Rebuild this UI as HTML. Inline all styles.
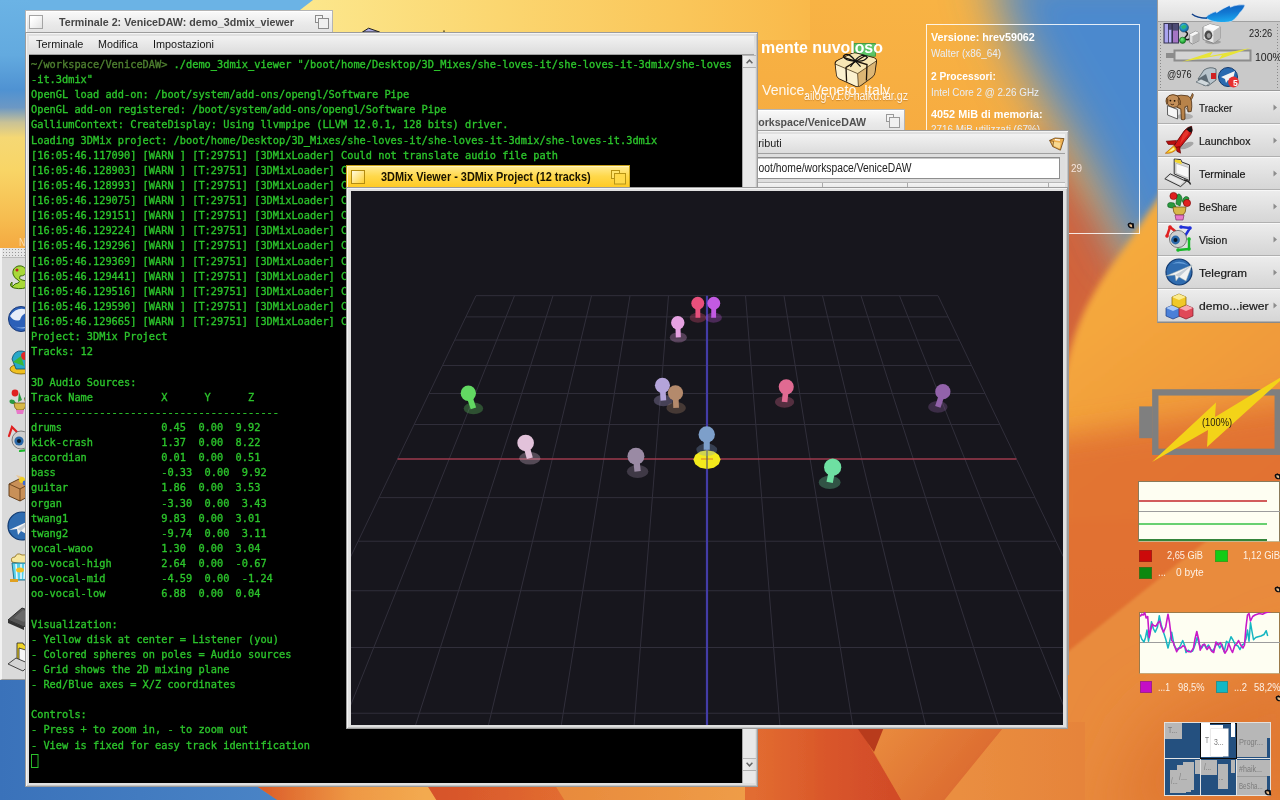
<!DOCTYPE html>
<html lang="it"><head><meta charset="utf-8"><title>Haiku desktop - 3DMix Viewer</title>
<style>
html,body{margin:0;padding:0}
body{width:1280px;height:800px;overflow:hidden;position:relative;background:#f0953c;font-family:"Liberation Sans",sans-serif;font-size:12px;color:#000}
.a{position:absolute}
.t{position:absolute;white-space:nowrap;transform-origin:0 50%;display:block}
svg{position:absolute;overflow:visible}
pre{margin:0}
.tab{background:linear-gradient(#fafafa,#e9e9e9 60%,#e2e2e2);border:1px solid #b4b4b4;border-bottom:none;box-sizing:border-box;box-shadow:inset 1px 1px 0 #fff}
.tab.act{background:linear-gradient(#ffeb94,#ffd84a 45%,#ffc81e);border-color:#c9a21a;box-shadow:inset 1px 1px 0 #fff4c0}
.cbtn{width:14px;height:14px;box-sizing:border-box;border:1px solid #a4a4a4;background:linear-gradient(135deg,#fff 20%,#e2e2e2)}
.cbtn.act{border-color:#b48c10;background:linear-gradient(135deg,#fffbe0,#ffd030)}
.frame{box-sizing:border-box;border:1px solid #9c9c9c;background:#e0e0e0;box-shadow:inset 1px 1px 0 #f4f4f4, inset -1px -1px 0 #c4c4c4}
.menubar{background:linear-gradient(#f2f2f2,#dcdcdc);border-bottom:1px solid #a0a0a0;box-sizing:border-box}
.vscroll{background:#e9e9e9;box-sizing:border-box;border-left:1px solid #a8a8a8}
.sbtn{background:linear-gradient(90deg,#f0f0f0,#dedede);border-bottom:1px solid #b0b0b0;border-top:1px solid #b8b8b8;box-sizing:border-box}
.term{font-family:"DejaVu Sans Mono","Liberation Mono",monospace;color:#2cc42c;-webkit-text-stroke:0.35px #2cc42c;transform-origin:0 0;white-space:pre}
.term .pr{color:#4f8030;-webkit-text-stroke:0.35px #4f8030}
.term .cur{display:inline-block;width:5.6px;height:12px;border:1px solid #2cc42c;vertical-align:-2px}
.dbi{background:linear-gradient(#ececec,#dcdcdc 70%,#d6d6d6);border-top:1px solid #f8f8f8;border-bottom:1px solid #b0b0b0;box-sizing:border-box}
.wsw{background:#b7b7b7}

</style></head>
<body>
<svg class="bg" width="1280" height="800" viewBox="0 0 1280 800" style="left:0;top:0;overflow:hidden">
<defs>
<linearGradient id="gbase" x1="0" y1="0" x2="0" y2="1">
<stop offset="0" stop-color="#f8b344"/><stop offset=".3" stop-color="#f5a63e"/><stop offset=".55" stop-color="#ec8e3a"/><stop offset="1" stop-color="#e27a34"/>
</linearGradient>
<linearGradient id="gtop" x1="0" y1="0" x2="1" y2="0">
<stop offset="0" stop-color="#fce88e"/><stop offset=".4" stop-color="#fbd670"/><stop offset=".75" stop-color="#fac65a"/><stop offset="1" stop-color="#f9b94a"/>
</linearGradient>
<linearGradient id="gleft" x1="0" y1="0" x2="0" y2="1">
<stop offset="0" stop-color="#6bb3e5"/><stop offset=".22" stop-color="#63aadf"/><stop offset=".36" stop-color="#4f92d2"/>
<stop offset=".43" stop-color="#6c98c4"/><stop offset=".49" stop-color="#c9c296"/><stop offset=".55" stop-color="#f5d874"/>
<stop offset=".68" stop-color="#f8d566"/><stop offset=".87" stop-color="#f6bd50"/><stop offset="1" stop-color="#f4a840"/>
</linearGradient>
<linearGradient id="gpetal" x1="0.2" y1="0" x2="0.7" y2="1">
<stop offset="0" stop-color="#f6b444"/><stop offset=".45" stop-color="#f4a63c"/><stop offset="1" stop-color="#ec8e3a"/>
</linearGradient>
<filter id="b8" x="-20%" y="-20%" width="140%" height="140%"><feGaussianBlur stdDeviation="8"/></filter>
<filter id="b14" x="-30%" y="-30%" width="160%" height="160%"><feGaussianBlur stdDeviation="14"/></filter>
<filter id="b18" x="-30%" y="-30%" width="160%" height="160%"><feGaussianBlur stdDeviation="25"/></filter>
<linearGradient id="gbl" x1="0" y1="0" x2="1" y2="0"><stop offset="0" stop-color="#3a72ba"/><stop offset="1" stop-color="#4a84c6"/></linearGradient>
<linearGradient id="gp1" gradientUnits="userSpaceOnUse" x1="262" y1="0" x2="425" y2="0"><stop offset="0" stop-color="#dc5e2a"/><stop offset=".55" stop-color="#ee9844"/><stop offset="1" stop-color="#f3aa50"/></linearGradient>
<linearGradient id="gp2" gradientUnits="userSpaceOnUse" x1="432" y1="0" x2="560" y2="0"><stop offset="0" stop-color="#d6522a"/><stop offset="1" stop-color="#e26c30"/></linearGradient>
<linearGradient id="gp3" gradientUnits="userSpaceOnUse" x1="560" y1="0" x2="760" y2="0"><stop offset="0" stop-color="#e88a3c"/><stop offset="1" stop-color="#ef9e48"/></linearGradient>
<linearGradient id="gp4" gradientUnits="userSpaceOnUse" x1="755" y1="0" x2="890" y2="0"><stop offset="0" stop-color="#e26c30"/><stop offset=".6" stop-color="#d8542a"/><stop offset="1" stop-color="#d24c28"/></linearGradient>
<linearGradient id="gp5" gradientUnits="userSpaceOnUse" x1="890" y1="730" x2="975" y2="800"><stop offset="0" stop-color="#e8883c"/><stop offset="1" stop-color="#da662e"/></linearGradient>
<linearGradient id="gp6" gradientUnits="userSpaceOnUse" x1="960" y1="0" x2="1080" y2="0"><stop offset="0" stop-color="#ea8e40"/><stop offset="1" stop-color="#e6843a"/></linearGradient>
<filter id="b1" x="-5%" y="-5%" width="110%" height="110%"><feGaussianBlur stdDeviation="0.7"/></filter>
<filter id="b2" x="-20%" y="-20%" width="140%" height="140%"><feGaussianBlur stdDeviation="1.5"/></filter>
<filter id="b4" x="-20%" y="-20%" width="140%" height="140%"><feGaussianBlur stdDeviation="3"/></filter>
<filter id="b30" x="-30%" y="-30%" width="160%" height="160%"><feGaussianBlur stdDeviation="30"/></filter>
</defs>
<rect width="1280" height="800" fill="url(#gbase)"/>
<!-- pale yellow area behind terminal tab -->
<rect x="290" y="0" width="520" height="40" fill="url(#gtop)"/>
<polygon points="362.5,32 368.6,28.2 379.5,32" fill="#a9a9e2" stroke="#1e1e1e" stroke-width="1"/><rect x="443.2" y="30.4" width="1.6" height="1.6" fill="#6a5a2a"/>
<!-- top-left sky blue -->
<polygon points="0,0 313,0 287,20 0,20" fill="#6bb3e5"/>
<rect x="0" y="0" width="30" height="250" fill="url(#gleft)"/>
<!-- dark orange under blue -->
<g filter="url(#b14)"><path d="M1040,130 L1104,225 L1124,268 L1088,360 L1040,430 L1000,300 Z" fill="#d2643a"/></g>
<!-- blue petal top right -->
<g filter="url(#b18)">
<path d="M988,-40 C1000,20 1030,75 1062,126 C1084,160 1104,205 1128,262 L1320,262 L1320,-40 Z" fill="#4c89ce"/>
</g>
<!-- yellow-orange petal with crisp edge -->
<g filter="url(#b4)"><path d="M1170,180 C1150,210 1135,232 1127,244 C1112,265 1098,284 1085,310 C1076,330 1068,352 1060,400 L1040,520 L1320,520 L1320,100 Z" fill="url(#gpetal)"/></g>
<!-- lower right -->
<g filter="url(#b14)">
<polygon points="1040,440 1320,400 1320,560 1040,700" fill="#df6c2f" opacity=".8"/>
</g>
<g filter="url(#b2)"><polygon points="1040,674 1320,450 1320,830 1040,830" fill="#e98b3e"/></g>
<g filter="url(#b30)"><polygon points="1150,720 1320,640 1320,830 1100,830" fill="#e07832"/></g>
<!-- bottom strip petals -->
<polygon points="0,680 30,680 30,785 255,785 279,801 0,801" fill="url(#gbl)"/>
<g filter="url(#b1)">
<polygon points="255,785 427,785 437,801 279,801" fill="url(#gp1)"/>
<polygon points="427,785 555,785 565,801 437,801" fill="url(#gp2)"/>
<polygon points="555,785 765,785 765,801 565,801" fill="url(#gp3)"/>
<polygon points="745,722 855.5,722 906,808 745,808" fill="url(#gp4)"/>
<polygon points="884,722 1008,722 938,808 906,808 874,752" fill="url(#gp5)"/>
<polygon points="853,722 886,722 874,752" fill="#b83a1e"/>
<polygon points="1008,722 1085,722 1085,808 938,808" fill="url(#gp6)"/>
</g>
</svg>
<svg style="left:833px;top:42px" width="46" height="46" viewBox="0 0 46 46">
<rect x="21" y="1.6" width="21.4" height="12.6" fill="#5cc466" stroke="#2f9440" stroke-width=".8"/>
<g stroke-linejoin="round">
<path d="M2.4,22 Q2,19.6 5,18.4 L19,11.8 Q21,11 23.6,11.6 L40.6,16 Q43.6,17 43.2,20 L41.6,31 Q41.2,33.4 39,35 L27.4,43.4 Q25,45 22.4,43.8 L6.4,36.6 Q4,35.4 3.8,33 Z" fill="#f3dca0" stroke="#241608" stroke-width="1.5"/>
<path d="M2.6,22.4 L24.6,31.6 L25.4,44.2 Q24,44.6 22.4,43.8 L6.4,36.6 Q4,35.4 3.8,33 Z" fill="#fbf1cf"/>
<path d="M24.6,31.6 L43,19.2 L41.6,31 Q41.2,33.4 39,35 L27.4,43.4 Q26.4,44 25.4,44.2 Z" fill="#ddb674"/>
<path d="M2.6,22 Q2.4,19.8 5,18.4 L19,11.8 Q21,11 23.6,11.6 L40.6,16 Q43.4,16.8 43,19.2 L24.6,31.6 Z" fill="#f7e6b4"/>
</g>
<path d="M2.6,22.2 L24.6,31.6 L43,19.2 M24.6,31.6 L25.4,44" fill="none" stroke="#3a2810" stroke-width=".9" opacity=".8"/>
<path d="M11,15.6 L34,22.6 L33.4,38.6 M32,13.8 L13,25.4 L13.6,39.6" stroke="#1c1208" stroke-width="1.3" fill="none"/>
<path d="M22,18.6 q-7.6,-9.6 -11.6,-4.4 q3.2,5.4 11.6,4.400 q7.400,-8.600 12.400,-3.200 q-4.200,5.400 -12.400,3.200 M22,18.600 l-4.600,6.400 M22,18.600 l5.600,6" fill="none" stroke="#111" stroke-width="1.25"/>
</svg>
<span class="t" style="left:760.70px;top:38.43px;font-size:17.2px;line-height:19.76px;font-weight:bold;color:#ffffff;transform:scaleX(0.9251);">mente nuvoloso</span>
<span class="t" style="left:762.00px;top:80.62px;font-size:15px;line-height:17.23px;color:#ffffff;transform:scaleX(0.9417);opacity:.92;">Venice, Veneto, Italy</span>
<span class="t" style="left:803.70px;top:89.64px;font-size:12px;line-height:13.79px;color:#ffffff;transform:scaleX(0.8859);text-shadow:0 1px 1px rgba(120,60,0,.35);opacity:.88;">ailog-v1.0-haiku.tar.gz</span>
<div class="a" style="left:925.5px;top:24px;width:214px;height:209.5px;border:1px solid rgba(255,255,255,.85);box-sizing:border-box"></div>
<span class="t" style="left:931.00px;top:31.45px;font-size:11px;line-height:12.64px;font-weight:bold;color:#ffffff;transform:scaleX(0.9756);">Versione: hrev59062</span>
<span class="t" style="left:931.00px;top:47.34px;font-size:11px;line-height:12.64px;color:#e8eef6;transform:scaleX(0.8993);">Walter (x86_64)</span>
<span class="t" style="left:931.00px;top:69.64px;font-size:11px;line-height:12.64px;font-weight:bold;color:#ffffff;transform:scaleX(0.9297);">2 Processori:</span>
<span class="t" style="left:931.00px;top:85.64px;font-size:11px;line-height:12.64px;color:#e8eef6;transform:scaleX(0.8955);">Intel Core 2 @ 2.26 GHz</span>
<span class="t" style="left:931.00px;top:108.25px;font-size:11px;line-height:12.64px;font-weight:bold;color:#ffffff;transform:scaleX(0.9868);">4052 MiB di memoria:</span>
<span class="t" style="left:931.00px;top:123.05px;font-size:11px;line-height:12.64px;color:#e8eef6;transform:scaleX(0.9005);">2716 MiB utilizzati (67%)</span>
<span class="t" style="left:1071.00px;top:161.59px;font-size:11.5px;line-height:13.21px;color:#f4e4dc;transform:scaleX(0.8600);">29</span>
<svg style="left:1126.8px;top:222.2px" width="8" height="7" viewBox="0 0 8 7"><path d="M0.6,2.6 q0.2,-1.6 2,-1.8 l0.8,-0.6 l1,0.8 l2.4,0.2 l0.4,5.2 l-3.6,-0.2 q-2.8,-0.6 -3,-3.6z" fill="#0c0c10"/><path d="M2,2.6 q1.6,-1 3,0.2 l0.2,2.4 q-2.6,0.4 -3.2,-2.6z" fill="#e2b98a"/></svg>
<svg style="left:1135px;top:375px" width="145" height="100" viewBox="0 0 145 100">
<rect x="4.2" y="31.4" width="13.2" height="31.8" fill="#7f7f7f"/>
<rect x="20.3" y="17.4" width="122.4" height="59.4" fill="none" stroke="#7f7f7f" stroke-width="6.3"/>
<path d="M17,87 L81,27.6 L80,42 L156,-4 L72,72 L73,55 Z" fill="#f3d318"/>
</svg>
<span class="t" style="left:1201.70px;top:416.05px;font-size:11px;line-height:12.64px;color:#2a2010;transform:scaleX(0.8461);">(100%)</span>
<svg style="left:1274px;top:473px" width="8" height="7" viewBox="0 0 8 7"><path d="M0.6,2.6 q0.2,-1.6 2,-1.8 l0.8,-0.6 l1,0.8 l2.4,0.2 l0.4,5.2 l-3.6,-0.2 q-2.8,-0.6 -3,-3.6z" fill="#0c0c10"/><path d="M2,2.6 q1.6,-1 3,0.2 l0.2,2.4 q-2.6,0.4 -3.2,-2.6z" fill="#e2b98a"/></svg>
<div class="a" style="left:1138px;top:481px;width:142px;height:60.5px;background:#fefef2;border:1px solid #8a7a5a;border-bottom-color:#c8b890;box-sizing:border-box"></div>
<div class="a" style="left:1139px;top:500.2px;width:127.6px;height:1.8px;background:#d25c5c"></div>
<div class="a" style="left:1139px;top:511px;width:141px;height:1px;background:#9c9c9c"></div>
<div class="a" style="left:1139px;top:522.8px;width:127.6px;height:1.9px;background:#68d070"></div>
<div class="a" style="left:1139px;top:539px;width:127.6px;height:2px;background:#34843a"></div>
<div class="a" style="left:1139.2px;top:549.6px;width:12.6px;height:12.4px;background:#cc0a0a;box-shadow:inset 0 0 0 1px rgba(120,60,30,.45)"></div>
<div class="a" style="left:1215.2px;top:549.6px;width:12.8px;height:12.4px;background:#12cc16;box-shadow:inset 0 0 0 1px rgba(120,100,30,.45)"></div>
<div class="a" style="left:1139.2px;top:566.6px;width:12.6px;height:12.2px;background:#0b880f;box-shadow:inset 0 0 0 1px rgba(120,80,30,.45)"></div>
<span class="t" style="left:1166.80px;top:549.25px;font-size:11px;line-height:12.64px;color:#fdf0e4;transform:scaleX(0.8411);">2,65 GiB</span>
<span class="t" style="left:1243.00px;top:549.25px;font-size:11px;line-height:12.64px;color:#fdf0e4;transform:scaleX(0.8645);">1,12 GiB</span>
<span class="t" style="left:1157.50px;top:566.25px;font-size:11px;line-height:12.64px;color:#fdf0e4;transform:scaleX(0.8725);">...</span>
<span class="t" style="left:1175.50px;top:566.25px;font-size:11px;line-height:12.64px;color:#fdf0e4;transform:scaleX(0.9244);">0 byte</span>
<svg style="left:1274.4px;top:586px" width="8" height="7" viewBox="0 0 8 7"><path d="M0.6,2.6 q0.2,-1.6 2,-1.8 l0.8,-0.6 l1,0.8 l2.4,0.2 l0.4,5.2 l-3.6,-0.2 q-2.8,-0.6 -3,-3.6z" fill="#0c0c10"/><path d="M2,2.6 q1.6,-1 3,0.2 l0.2,2.4 q-2.6,0.4 -3.2,-2.6z" fill="#e2b98a"/></svg>
<div class="a" style="left:1139px;top:611.5px;width:141px;height:62px;background:#fefef2;border:1px solid #9a7a4a;border-bottom-color:#c8a878;box-sizing:border-box"></div>
<div class="a" style="left:1140px;top:642px;width:140px;height:1px;background:#9c9c9c"></div>
<svg style="left:1139px;top:612px;overflow:hidden" width="141" height="61" viewBox="0 0 141 61">
<polyline fill="none" stroke="#16b6c2" stroke-width="1.5" stroke-linejoin="round" points="1.2,22.5 2.7,27.0 5.0,30.0 6.5,25.5 8.0,18.0 9.5,29.2 11.0,20.2 12.5,9.7 14.3,16.5 16.2,20.2 18.5,15.0 20.3,3.7 22.2,12.7 24.5,20.2 26.7,27.0 29.0,36.0 30.5,30.0 32.7,20.2 35.0,33.0 37.2,36.7 39.5,37.5 41.7,33.0 43.7,28.5 45.5,33.0 47.0,40.5 49.2,38.2 51.5,39.7 53.7,39.0 56.0,33.0 58.2,25.5 60.5,33.0 62.7,36.0 65.0,32.2 67.2,36.0 69.5,33.0 71.7,37.5 74.0,39.0 76.2,34.5 78.5,30.7 80.7,36.0 83.0,32.2 85.2,39.7 87.5,29.2 89.7,31.5 92.0,24.7 94.2,28.5 96.5,33.0 98.7,33.7 101.0,37.5 103.2,33.0 104.7,32.2 107.0,27.0 108.5,18.0 110.0,29.2 111.5,10.5 113.0,19.5 114.5,27.7 116.7,25.5 119.0,24.7 122.0,24.0 125.0,22.5 127.2,18.7 128.7,24.0"/>
<polyline fill="none" stroke="#c81ac8" stroke-width="1.6" stroke-linejoin="round" points="1.2,4.5 2.7,2.2 4.2,3.0 5.7,0.7 7.2,6.0 8.7,4.5 10.2,25.5 11.7,18.0 13.2,12.0 14.7,13.5 17.0,14.2 19.2,10.5 20.7,9.0 22.2,15.0 24.5,20.2 26.7,15.0 29.0,2.2 30.5,10.5 32.7,28.5 34.2,30.0 35.7,34.5 37.7,39.7 39.5,36.0 41.7,36.0 44.0,33.7 46.2,35.2 47.7,39.0 50.0,39.7 52.2,39.7 54.5,36.0 56.0,27.0 57.8,19.5 59.7,27.7 61.2,38.2 63.5,33.0 65.7,32.2 68.0,37.5 70.2,34.5 72.5,39.0 74.7,40.5 77.0,30.0 79.2,33.0 81.5,30.7 83.7,36.0 86.0,41.2 88.2,37.5 89.7,31.5 92.0,37.5 93.5,40.5 95.7,33.7 98.0,31.5 99.5,28.5 101.7,33.0 104.0,36.0 105.5,33.0 107.0,15.0 108.5,3.0 110.0,1.5 111.5,9.0 113.7,4.5 116.0,3.0 118.2,2.2 120.5,1.5 123.5,2.2 126.5,0.7 129.5,-0.0 132.5,-0.8 137.0,-1.5 141.5,-2.7"/>
</svg>
<div class="a" style="left:1140px;top:681px;width:12px;height:12px;background:#c40ec6;box-shadow:inset 0 0 0 1px rgba(120,60,60,.45)"></div>
<div class="a" style="left:1216px;top:681px;width:12.2px;height:12px;background:#12b8c4;box-shadow:inset 0 0 0 1px rgba(90,90,60,.45)"></div>
<span class="t" style="left:1157.50px;top:681.04px;font-size:11px;line-height:12.64px;color:#fdf0e4;transform:scaleX(0.7850);">...1</span>
<span class="t" style="left:1178.20px;top:681.04px;font-size:11px;line-height:12.64px;color:#fdf0e4;transform:scaleX(0.8497);">98,5%</span>
<span class="t" style="left:1234.00px;top:681.04px;font-size:11px;line-height:12.64px;color:#fdf0e4;transform:scaleX(0.8505);">...2</span>
<span class="t" style="left:1254.20px;top:681.04px;font-size:11px;line-height:12.64px;color:#fdf0e4;transform:scaleX(0.8497);">58,2%</span>
<svg style="left:1275px;top:695px" width="8" height="7" viewBox="0 0 8 7"><path d="M0.6,2.6 q0.2,-1.6 2,-1.8 l0.8,-0.6 l1,0.8 l2.4,0.2 l0.4,5.2 l-3.6,-0.2 q-2.8,-0.6 -3,-3.6z" fill="#0c0c10"/><path d="M2,2.6 q1.6,-1 3,0.2 l0.2,2.4 q-2.6,0.4 -3.2,-2.6z" fill="#e2b98a"/></svg>
<div class="a" id="ws" style="left:1164px;top:721.6px;width:107.4px;height:74px;background:#24507f;border:1px solid #e4e0dc;box-sizing:border-box;overflow:hidden">
<div class="a" style="left:34.6px;top:0;width:1.2px;height:74px;background:#e4e4e4"></div>
<div class="a" style="left:70.6px;top:0;width:1.2px;height:74px;background:#e4e4e4"></div>
<div class="a" style="left:0;top:35.6px;width:107px;height:1.3px;background:#e4e4e4"></div>
<div class="a wsw" style="left:0;top:0;width:16.5px;height:16.8px"></div>
<div class="a" style="left:35px;top:0;width:36.6px;height:36.8px;border:1.3px solid #0c0c0c;box-sizing:border-box"></div>
<div class="a" style="left:36.4px;top:0.4px;width:9px;height:33.6px;background:#fff"></div>
<div class="a" style="left:44px;top:2px;width:14px;height:32px;background:#fdfdfd"></div>
<div class="a" style="left:46px;top:6px;width:16.6px;height:27px;background:#fff;box-shadow:0 0 0 .6px #ddd"></div>
<div class="a" style="left:65.6px;top:0.4px;width:4px;height:14px;background:#fff"></div>
<div class="a wsw" style="left:72px;top:0.4px;width:29.6px;height:34.4px"></div><div class="a wsw" style="left:101px;top:0.4px;width:6px;height:14.6px"></div>
<div class="a wsw" style="left:4.6px;top:47.6px;width:16px;height:22.4px"></div><div class="a wsw" style="left:11.5px;top:42px;width:14px;height:27px"></div><div class="a wsw" style="left:18px;top:39.6px;width:11px;height:27.6px"></div><div class="a wsw" style="left:30px;top:37px;width:4.6px;height:14px"></div>
<div class="a wsw" style="left:36.4px;top:37px;width:15.4px;height:15.8px"></div><div class="a wsw" style="left:52.8px;top:41.4px;width:10.4px;height:25px"></div><div class="a wsw" style="left:65.6px;top:37px;width:4.2px;height:13.6px"></div>
<div class="a wsw" style="left:72px;top:37px;width:29.6px;height:35.4px"></div><div class="a" style="left:72px;top:53.6px;width:29.6px;height:1px;background:#9c9c9c"></div><div class="a wsw" style="left:101px;top:37px;width:6px;height:16px"></div>
</div>
<span class="t" style="left:1167.60px;top:725.25px;font-size:9px;line-height:10.34px;color:#7c7c7c;transform:scaleX(0.7500);">T...</span>
<span class="t" style="left:1204.60px;top:735.46px;font-size:9px;line-height:10.34px;color:#7c7c7c;transform:scaleX(0.7277);">T</span>
<span class="t" style="left:1214.00px;top:737.46px;font-size:9px;line-height:10.34px;color:#7c7c7c;transform:scaleX(0.7677);">3...</span>
<span class="t" style="left:1239.00px;top:737.25px;font-size:9px;line-height:10.34px;color:#7c7c7c;transform:scaleX(0.8273);">Progr...</span>
<span class="t" style="left:1171.00px;top:775.86px;font-size:9px;line-height:10.34px;color:#7c7c7c;transform:scaleX(0.6500);">/...</span>
<span class="t" style="left:1178.60px;top:771.86px;font-size:9px;line-height:10.34px;color:#7c7c7c;transform:scaleX(0.8000);">/...</span>
<span class="t" style="left:1204.00px;top:761.86px;font-size:9px;line-height:10.34px;color:#7c7c7c;transform:scaleX(0.7000);">/...</span>
<span class="t" style="left:1219.00px;top:771.86px;font-size:9px;line-height:10.34px;color:#7c7c7c;transform:scaleX(0.6000);">...</span>
<span class="t" style="left:1239.00px;top:763.86px;font-size:9px;line-height:10.34px;color:#7c7c7c;transform:scaleX(0.7927);">#haik...</span>
<span class="t" style="left:1239.00px;top:780.86px;font-size:9px;line-height:10.34px;color:#7c7c7c;transform:scaleX(0.6837);">BeSha...</span>
<svg style="left:1263.6px;top:788.6px" width="8" height="7" viewBox="0 0 8 7"><path d="M0.6,2.6 q0.2,-1.6 2,-1.8 l0.8,-0.6 l1,0.8 l2.4,0.2 l0.4,5.2 l-3.6,-0.2 q-2.8,-0.6 -3,-3.6z" fill="#0c0c10"/><path d="M2,2.6 q1.6,-1 3,0.2 l0.2,2.4 q-2.6,0.4 -3.2,-2.6z" fill="#e2b98a"/></svg>
<div class="a" id="trk" style="left:740px;top:109px;width:329px;height:100px">
<div class="a tab" style="left:0;top:0;width:165px;height:24px"></div>
<svg class="zbtn" style="left:146px;top:5px" width="15" height="15" viewBox="0 0 15 15"><rect x="0.5" y="0.5" width="7" height="7" fill="#f4f4f4" stroke="#9a9a9a"/><rect x="3.5" y="3.5" width="10" height="10" fill="#f0f0f0" stroke="#9a9a9a"/></svg>
<div class="a frame" style="left:0;top:21px;width:329px;height:545px"></div>
<div class="a menubar" style="left:4px;top:25px;width:321px;height:20px"></div>
<div class="a" style="left:4px;top:45px;width:321px;height:28px;background:#dedede"></div>
<div class="a" style="left:6px;top:48px;width:314px;height:21.6px;background:#fff;border:1px solid #8e8e8e;box-sizing:border-box;box-shadow:inset 1px 1px 0 #c8c8c8"></div>
<div class="a" style="left:4px;top:73px;width:321px;height:7px;background:linear-gradient(#f4f4f4,#e2e2e2);border-top:1px solid #b8b8b8"></div>
<div class="a" style="left:82px;top:74px;width:1px;height:6px;background:#aaa"></div>
<div class="a" style="left:167px;top:74px;width:1px;height:6px;background:#aaa"></div>
<div class="a" style="left:308px;top:74px;width:1px;height:6px;background:#aaa"></div>
<svg style="left:308px;top:27.5px" width="17" height="15" viewBox="0 0 17 15"><path d="M1.6,3.4 l5.4,-2.4 l9,0.6 l-3.6,11.6 l-7.6,-3.600z" fill="#eeb050" stroke="#6a4010" stroke-width=".8"/><path d="M4,4.400 l8.600,1.400 l-1,5.600 l-6.400,-2.800z" fill="#f8d890"/><path d="M1.600,3.400 l4,1 l-0.800,5.200" fill="none" stroke="#6a4010" stroke-width=".7"/><path d="M7,2.600 l5,0.600" stroke="#fff" stroke-width="1.200"/></svg>
</div>
<span class="t" style="left:750.36px;top:114.50px;font-size:11.6px;line-height:13.33px;font-weight:bold;color:#505050;transform:scaleX(0.9136);">workspace/VeniceDAW</span>
<span class="t" style="left:745.40px;top:137.08px;font-size:11.4px;line-height:13.10px;color:#222;transform:scaleX(0.9469);">Attributi</span>
<span class="t" style="left:749.59px;top:161.54px;font-size:12px;line-height:13.79px;color:#222;transform:scaleX(0.8602);">/boot/home/workspace/VeniceDAW</span>
<div class="a" id="lbx" style="left:0;top:248px;width:25px;height:432px;background:#dadada;overflow:hidden;border-left:2px solid #f2f2f2;border-bottom:1px solid #9a9a9a;box-sizing:border-box">
<div class="a" style="left:0;top:0;width:25px;height:9px;background:#e6e6e6;background-image:radial-gradient(#999 0.7px,transparent 0.9px);background-size:3px 3px;border-bottom:1px solid #bbb"></div>
<svg style="left:4px;top:14px" width="30" height="32" viewBox="0 0 30 32"><path d="M6,20 q-4,4 2,6 q10,2 14,-2 q2,-5 -6,-6 q-4,-1 -2,-4 q6,0 6,-5 q-1,-6 -8,-5 q-6,2 -5,8 q1,4 5,6 q3,2 0,3 q-3,0 -6,4z" fill="#a8d838" stroke="#3a6a08" stroke-width="1"/><circle cx="11" cy="8" r="1.5" fill="#c02020"/></svg>
<svg style="left:4px;top:56px" width="30" height="32" viewBox="0 0 30 32"><circle cx="15" cy="15" r="12.5" fill="#2c60b8" stroke="#1a3a78" stroke-width="1"/><path d="M4,12 q8,-12 22,-4 q-10,0 -12,8 q-6,2 -10,-4z" fill="#e8eef8"/><path d="M8,22 q8,4 16,-2 q-6,8 -16,2z" fill="#8ab0e8"/></svg>
<svg style="left:4px;top:99px" width="30" height="32" viewBox="0 0 30 32"><ellipse cx="15" cy="22" rx="11" ry="5" fill="#f0c020" stroke="#7a5a00" stroke-width=".8"/><path d="M6,12 q2,-9 10,-8 q8,1 9,10 l-4,8 h-11z" fill="#28a8c8" stroke="#0a4a68" stroke-width=".8"/><circle cx="19" cy="9" r="4" fill="#e02828"/><path d="M7,15 l8,-6 l3,10z" fill="#38b838"/></svg>
<svg style="left:4px;top:138px" width="30" height="32" viewBox="0 0 30 32"><path d="M8,14 q-6,-2 -4,3 q3,2 6,0z M18,12 q4,-5 7,-1 q-1,4 -6,4z M13,6 l3,8 l-4,2z" fill="#2a9a40"/><circle cx="9" cy="7" r="3.4" fill="#e02020"/><circle cx="22" cy="14" r="3.4" fill="#e02020"/><path d="M8,17 h12 q0,5 -3,7 h-6 q-3,-2 -3,-7z" fill="#d8b848" stroke="#6a4a10" stroke-width=".7"/><path d="M10,24 h8 l-1,4 h-6z" fill="#e878c8"/></svg>
<svg style="left:4px;top:176px" width="30" height="32" viewBox="0 0 30 32"><g stroke-width="2.2" fill="none" stroke-linecap="round"><path d="M3,12 l3,-9 l5,5" stroke="#e02020"/><path d="M22,16 v10 l-8,1" stroke="#18b828"/></g><circle cx="15" cy="16" r="9" fill="#cfcfcf" stroke="#666" stroke-width=".8"/><circle cx="13" cy="17" r="4.6" fill="#2a68a8"/><circle cx="13" cy="17" r="2.1" fill="#081828"/></svg>
<svg style="left:4px;top:226px" width="30" height="32" viewBox="0 0 30 32"><path d="M3,10 l10,-5 l12,4 v12 l-11,6 l-11,-5z" fill="#c89058" stroke="#5a3410" stroke-width=".9"/><path d="M3,10 l11,5 l11,-6 M14,15 v12" fill="none" stroke="#5a3410" stroke-width=".8"/><path d="M13,5 l-3,-4 l8,2z" fill="#e8c898"/><circle cx="16" cy="6" r="3" fill="#f0d020"/><circle cx="19" cy="9" r="2.4" fill="#3868d8"/></svg>
<svg style="left:4px;top:262px" width="30" height="32" viewBox="0 0 30 32"><circle cx="16" cy="16" r="14" fill="#2f6cb0" stroke="#123a70" stroke-width="1.2"/><path d="M3,20 l24,-11 l-5,16 l-7,-4 l-3,4 l-1,-6z" fill="#f2f2f2"/><path d="M11,19 l16,-10 l-12,12z" fill="#c4ccd4"/></svg>
<svg style="left:4px;top:304px" width="30" height="32" viewBox="0 0 30 32"><path d="M6,10 q-2,-5 3,-5 q2,-5 7,-2 q6,-1 6,5 q3,2 0,5z" fill="#f8e8a0" stroke="#8a6a10" stroke-width=".8"/><path d="M6,11 h17 l-2,17 h-13z" fill="#58d0e8" stroke="#1a6a88" stroke-width=".9"/><path d="M10,12 l1,15 M15,12 v15 M19,12 l-1,15" stroke="#e8f8ff" stroke-width="1.6"/><ellipse cx="14" cy="18" rx="4" ry="2.5" fill="#f0c020"/><path d="M4,27 h8 v3 h-8z" fill="#e0a020"/></svg>
<svg style="left:4px;top:356px" width="30" height="32" viewBox="0 0 30 32"><path d="M2,16 l14,-12 l14,5 l-12,14z" fill="#555" stroke="#222" stroke-width=".9"/><path d="M2,16 l16,7 v3 l-16,-7z" fill="#333"/><path d="M8,14 l9,-8 l9,3 l-8,9z" fill="#6a6a6a"/></svg>
<svg style="left:4px;top:394px" width="30" height="32" viewBox="0 0 30 32"><path d="M11,1 h6 l1,2 h6 v19 l-13,-4z" fill="#f0d428" stroke="#222" stroke-width=".8"/><path d="M13,6 l10,3 v13 l-10,-4z" fill="#f6f6f6" stroke="#222" stroke-width=".8"/><path d="M2,22 l8,-6 l14,6 l-7,7z" fill="#d4d4d4" stroke="#333" stroke-width=".9"/></svg>
</div>
<span class="t" style="left:18.60px;top:237.35px;font-size:10px;line-height:11.49px;color:#fff;transform:scaleX(0.8862);opacity:.6;">N</span>
<div class="a win" id="term" style="left:25px;top:10px;width:733.4px;height:777px">
<div class="a tab" style="left:0;top:0;width:308px;height:24px"></div>
<div class="a cbtn" style="left:4px;top:5px"></div>
<svg class="zbtn" style="left:290px;top:5px" width="15" height="15" viewBox="0 0 15 15"><rect x="0.5" y="0.5" width="7" height="7" fill="#f4f4f4" stroke="#8c8c8c"/><rect x="3.5" y="3.5" width="10" height="10" fill="#f0f0f0" stroke="#8c8c8c"/></svg>
<div class="a frame" style="left:0;top:22px;width:733.4px;height:755px"></div>
<div class="a menubar" style="left:4px;top:26px;width:725px;height:19px"></div>
<div class="a" style="left:4px;top:45.4px;width:713px;height:727.8px;background:#000"></div>
<div class="a vscroll" style="left:717px;top:45.4px;width:13.4px;height:727.8px">
 <div class="a sbtn" style="left:0;top:0;width:13px;height:13px"></div>
 <div class="a sbtn" style="left:0;bottom:12.6px;width:13px;height:12.4px"></div>
 <svg style="left:3px;top:4px" width="7" height="5" viewBox="0 0 7 5"><path d="M0.6,4.2 L3.5,1.2 L6.4,4.2" fill="none" stroke="#666" stroke-width="1.5"/></svg>
 <svg style="left:3px;bottom:16px" width="7" height="5" viewBox="0 0 7 5"><path d="M0.6,0.8 L3.5,3.8 L6.4,0.8" fill="none" stroke="#666" stroke-width="1.5"/></svg>
</div>
</div>
<span class="t" style="left:59.40px;top:15.30px;font-size:11.6px;line-height:13.33px;font-weight:bold;color:#464646;transform:scaleX(0.9220);">Terminale 2: VeniceDAW: demo_3dmix_viewer</span>
<span class="t" style="left:35.50px;top:38.48px;font-size:11.4px;line-height:13.10px;color:#151515;transform:scaleX(0.9611);">Terminale</span>
<span class="t" style="left:98.00px;top:38.48px;font-size:11.4px;line-height:13.10px;color:#151515;transform:scaleX(0.9423);">Modifica</span>
<span class="t" style="left:153.00px;top:38.48px;font-size:11.4px;line-height:13.10px;color:#151515;transform:scaleX(0.9531);">Impostazioni</span>
<pre class="a term" style="left:30.7px;top:56.90px;font-size:11px;line-height:15.12px;transform:scaleX(0.9362)"><span class="pr">~/workspace/VeniceDAW&gt;</span> ./demo_3dmix_viewer "/boot/home/Desktop/3D_Mixes/she-loves-it/she-loves-it-3dmix/she-loves
-it.3dmix"
OpenGL load add-on: /boot/system/add-ons/opengl/Software Pipe
OpenGL add-on registered: /boot/system/add-ons/opengl/Software Pipe
GalliumContext: CreateDisplay: Using llvmpipe (LLVM 12.0.1, 128 bits) driver.
Loading 3DMix project: /boot/home/Desktop/3D_Mixes/she-loves-it/she-loves-it-3dmix/she-loves-it.3dmix
[16:05:46.117090] [WARN ] [T:29751] [3DMixLoader] Could not translate audio file path
[16:05:46.128903] [WARN ] [T:29751] [3DMixLoader] Could not translate audio file path
[16:05:46.128993] [WARN ] [T:29751] [3DMixLoader] Could not translate audio file path
[16:05:46.129075] [WARN ] [T:29751] [3DMixLoader] Could not translate audio file path
[16:05:46.129151] [WARN ] [T:29751] [3DMixLoader] Could not translate audio file path
[16:05:46.129224] [WARN ] [T:29751] [3DMixLoader] Could not translate audio file path
[16:05:46.129296] [WARN ] [T:29751] [3DMixLoader] Could not translate audio file path
[16:05:46.129369] [WARN ] [T:29751] [3DMixLoader] Could not translate audio file path
[16:05:46.129441] [WARN ] [T:29751] [3DMixLoader] Could not translate audio file path
[16:05:46.129516] [WARN ] [T:29751] [3DMixLoader] Could not translate audio file path
[16:05:46.129590] [WARN ] [T:29751] [3DMixLoader] Could not translate audio file path
[16:05:46.129665] [WARN ] [T:29751] [3DMixLoader] Could not translate audio file path
Project: 3DMix Project
Tracks: 12

3D Audio Sources:
Track Name           X      Y      Z
----------------------------------------
drums                0.45  0.00  9.92
kick-crash           1.37  0.00  8.22
accordian            0.01  0.00  0.51
bass                 -0.33  0.00  9.92
guitar               1.86  0.00  3.53
organ                -3.30  0.00  3.43
twang1               9.83  0.00  3.01
twang2               -9.74  0.00  3.11
vocal-waoo           1.30  0.00  3.04
oo-vocal-high        2.64  0.00  -0.67
oo-vocal-mid         -4.59  0.00  -1.24
oo-vocal-low         6.88  0.00  0.04

Visualization:
- Yellow disk at center = Listener (you)
- Colored spheres on poles = Audio sources
- Grid shows the 2D mixing plane
- Red/Blue axes = X/Z coordinates

Controls:
- Press + to zoom in, - to zoom out
- View is fixed for easy track identification
<span class="cur"> </span></pre>
<div class="a" id="mix" style="left:346px;top:165px;width:722px;height:564px">
<div class="a tab act" style="left:0;top:0;width:284px;height:24px"></div>
<div class="a cbtn act" style="left:5px;top:5px"></div>
<svg class="zbtn" style="left:264.5px;top:5px" width="15" height="15" viewBox="0 0 15 15"><rect x="0.5" y="0.5" width="8" height="8" fill="#ffe36a" stroke="#b89414"/><rect x="3.5" y="3.5" width="11" height="10.5" fill="#ffd94a" stroke="#b89414"/></svg>
<div class="a frame" style="left:0;top:22px;width:722px;height:542px"></div>
<svg style="left:5px;top:26px;background:#17161d;overflow:hidden" width="712" height="534" viewBox="0 0 712 534">
<g stroke="#312f3b" stroke-width="1" fill="none"><line x1="824.38" y1="599.19" x2="-112.38" y2="599.19"/><line x1="787.43" y1="522.22" x2="-75.43" y2="522.22"/><line x1="755.89" y1="456.51" x2="-43.89" y2="456.51"/><line x1="728.65" y1="399.75" x2="-16.65" y2="399.75"/><line x1="704.88" y1="350.23" x2="7.12" y2="350.23"/><line x1="683.96" y1="306.65" x2="28.04" y2="306.65"/><line x1="648.84" y1="233.49" x2="63.16" y2="233.49"/><line x1="633.96" y1="202.48" x2="78.04" y2="202.48"/><line x1="620.52" y1="174.48" x2="91.48" y2="174.48"/><line x1="608.31" y1="149.06" x2="103.69" y2="149.06"/><line x1="597.19" y1="125.88" x2="114.81" y2="125.88"/><line x1="587.00" y1="104.66" x2="125.00" y2="104.66"/><line x1="824.38" y1="599.19" x2="587.00" y2="104.66"/><line x1="746.32" y1="599.19" x2="548.50" y2="104.66"/><line x1="668.25" y1="599.19" x2="510.00" y2="104.66"/><line x1="590.19" y1="599.19" x2="471.50" y2="104.66"/><line x1="512.13" y1="599.19" x2="433.00" y2="104.66"/><line x1="434.06" y1="599.19" x2="394.50" y2="104.66"/><line x1="277.94" y1="599.19" x2="317.50" y2="104.66"/><line x1="199.87" y1="599.19" x2="279.00" y2="104.66"/><line x1="121.81" y1="599.19" x2="240.50" y2="104.66"/><line x1="43.75" y1="599.19" x2="202.00" y2="104.66"/><line x1="-34.32" y1="599.19" x2="163.50" y2="104.66"/><line x1="-112.38" y1="599.19" x2="125.00" y2="104.66"/></g>
<line x1="665.41" y1="268.00" x2="46.59" y2="268.00" stroke="#9c3a4c" stroke-width="1.7"/><line x1="356.00" y1="599.19" x2="356.00" y2="104.66" stroke="#433ca6" stroke-width="2.2"/>
<polygon points="369.60,268.60 367.78,273.30 362.80,276.74 356.00,278.00 349.20,276.74 344.22,273.30 342.40,268.60 344.22,263.90 349.20,260.46 356.00,259.20 362.80,260.46 367.78,263.90" fill="#f3ea1c"/><line x1="350.00" y1="268.00" x2="362.00" y2="268.00" stroke="#e08a28" stroke-width="1.2"/><line x1="356.00" y1="259.00" x2="356.00" y2="278.00" stroke="#6a6a58" stroke-width="1.4"/>
<g><title>drums</title><ellipse cx="346.94" cy="126.77" rx="8.26" ry="4.95" fill="#e8507c" opacity=".3"/><line x1="346.94" y1="126.77" x2="346.77" y2="112.27" stroke="#e8507c" stroke-width="4.83"/><circle cx="346.77" cy="112.27" r="6.46" fill="#e8507c"/></g><g><title>bass</title><ellipse cx="362.64" cy="126.77" rx="8.26" ry="4.95" fill="#c25ae2" opacity=".3"/><line x1="362.64" y1="126.77" x2="362.77" y2="112.27" stroke="#c25ae2" stroke-width="4.83"/><circle cx="362.77" cy="112.27" r="6.46" fill="#c25ae2"/></g><g><title>kick-crash</title><ellipse cx="327.34" cy="146.40" rx="8.58" ry="5.15" fill="#e6a2e2" opacity=".3"/><line x1="327.34" y1="146.40" x2="326.79" y2="131.71" stroke="#e6a2e2" stroke-width="5.02"/><circle cx="326.79" cy="131.71" r="6.72" fill="#e6a2e2"/></g><g><title>guitar</title><ellipse cx="312.40" cy="209.48" rx="9.61" ry="5.77" fill="#b4a4da" opacity=".3"/><line x1="312.40" y1="209.48" x2="311.46" y2="194.34" stroke="#b4a4da" stroke-width="5.63"/><circle cx="311.46" cy="194.34" r="7.54" fill="#b4a4da"/></g><g><title>organ</title><ellipse cx="433.56" cy="210.99" rx="9.64" ry="5.78" fill="#e06a92" opacity=".3"/><line x1="433.56" y1="210.99" x2="435.24" y2="195.84" stroke="#e06a92" stroke-width="5.64"/><circle cx="435.24" cy="195.84" r="7.56" fill="#e06a92"/></g><g><title>twang2</title><ellipse cx="586.83" cy="215.88" rx="9.72" ry="5.83" fill="#9262aa" opacity=".3"/><line x1="586.83" y1="215.88" x2="591.86" y2="200.71" stroke="#9262aa" stroke-width="5.69"/><circle cx="591.86" cy="200.71" r="7.63" fill="#9262aa"/></g><g><title>vocal-waoo</title><ellipse cx="325.13" cy="216.96" rx="9.73" ry="5.84" fill="#b48a6c" opacity=".3"/><line x1="325.13" y1="216.96" x2="324.46" y2="201.78" stroke="#b48a6c" stroke-width="5.70"/><circle cx="324.46" cy="201.78" r="7.64" fill="#b48a6c"/></g><g><title>twang1</title><ellipse cx="122.43" cy="217.43" rx="9.74" ry="5.85" fill="#62d862" opacity=".3"/><line x1="122.43" y1="217.43" x2="117.33" y2="202.24" stroke="#62d862" stroke-width="5.70"/><circle cx="117.33" cy="202.24" r="7.65" fill="#62d862"/></g><g><title>accordian</title><ellipse cx="355.75" cy="258.83" rx="10.42" ry="6.25" fill="#7d9fca" opacity=".3"/><line x1="355.75" y1="258.83" x2="355.74" y2="243.54" stroke="#7d9fca" stroke-width="6.10"/><circle cx="355.74" cy="243.54" r="8.19" fill="#7d9fca"/></g><g><title>oo-vocal-low</title><ellipse cx="178.81" cy="267.27" rx="10.56" ry="6.34" fill="#e2c2da" opacity=".3"/><line x1="178.81" y1="267.27" x2="174.61" y2="251.97" stroke="#e2c2da" stroke-width="6.18"/><circle cx="174.61" cy="251.97" r="8.31" fill="#e2c2da"/></g><g><title>oo-vocal-high</title><ellipse cx="286.62" cy="280.45" rx="10.78" ry="6.47" fill="#9a8aa4" opacity=".3"/><line x1="286.62" y1="280.45" x2="284.94" y2="265.14" stroke="#9a8aa4" stroke-width="6.31"/><circle cx="284.94" cy="265.14" r="8.48" fill="#9a8aa4"/></g><g><title>oo-vocal-mid</title><ellipse cx="478.65" cy="291.43" rx="10.96" ry="6.57" fill="#6ee0a2" opacity=".3"/><line x1="478.65" y1="291.43" x2="481.67" y2="276.13" stroke="#6ee0a2" stroke-width="6.41"/><circle cx="481.67" cy="276.13" r="8.62" fill="#6ee0a2"/></g>
</svg>
</div>
<span class="t" style="left:381.20px;top:171.14px;font-size:12px;line-height:13.79px;font-weight:bold;color:#1a1400;transform:scaleX(0.9091);">3DMix Viewer - 3DMix Project (12 tracks)</span>
<div class="a" id="deskbar" style="left:1157px;top:0;width:123px;height:323px;background:#d8d8d8;border-left:1px solid #9c9c9c;border-bottom:1px solid #8a8a8a;box-sizing:border-box">
<div class="a" style="left:0;top:0;width:123px;height:22px;background:linear-gradient(#f0f0f0,#dedede);border-bottom:1px solid #a0a0a0;box-sizing:border-box"></div>
<svg style="left:33px;top:2px" width="58" height="22" viewBox="0 0 58 22">
<defs><linearGradient id="lf" x1="0" y1="0" x2="0.25" y2="1"><stop offset="0" stop-color="#0e58b8"/><stop offset=".55" stop-color="#1278d2"/><stop offset="1" stop-color="#1aa4ec"/></linearGradient></defs>
<path d="M0.900,12 C5,15 10,15.600 14.600,15.400 C18,12 22,10.600 25,9.600 L25.600,10.800 C30,7.600 35,5 38.600,3.400 L39.400,5.200 C44,3 50,2.600 54,3 C53,6 51,8.600 49,10.500 C47,14 44,17 40.900,19.200 C36,20.600 31,20.800 26.500,20.200 C22,19.400 19,18.400 16.500,16.900 C11,17.400 5,15.600 0.900,12 Z" fill="url(#lf)" stroke="#dfeaf8" stroke-width=".6"/>
<path d="M0.900,12 C5,15.200 10,16.200 16,16.200" stroke="#123f86" stroke-width="1.300" fill="none"/>
</svg>
<div class="a" style="left:0;top:22px;width:123px;height:69px;background:#c9c9c9;border-bottom:1px solid #9a9a9a;box-sizing:border-box"></div>
<div class="a" style="left:2px;top:24px;width:1px;height:65px;background:repeating-linear-gradient(#888 0 1px,transparent 1px 3px)"></div>
<div class="a" style="left:119px;top:24px;width:1px;height:65px;background:repeating-linear-gradient(#888 0 1px,transparent 1px 3px)"></div>
<svg style="left:6px;top:23px" width="62" height="22" viewBox="0 0 62 22">
<defs><radialGradient id="gl" cx=".4" cy=".35" r=".7"><stop offset="0" stop-color="#38c8e8"/><stop offset="1" stop-color="#0c5c9c"/></radialGradient>
<radialGradient id="gg" cx=".4" cy=".35" r=".7"><stop offset="0" stop-color="#6cf07c"/><stop offset="1" stop-color="#0c8c20"/></radialGradient></defs>
<rect x="-0.500" y="0" width="15.500" height="20.500" fill="#353350"/>
<rect x="0.600" y="1" width="3.400" height="18.500" fill="#aaa4f0"/><rect x="4.800" y="6.500" width="2.600" height="13" fill="#b8b2fa"/><rect x="4.800" y="1" width="2.600" height="5.500" fill="#4c4a74"/>
<rect x="9" y="1" width="5" height="6.500" fill="#4c4a74"/><rect x="9" y="7.500" width="5" height="12" fill="#a474c4"/>
<circle cx="20" cy="4.600" r="4.500" fill="url(#gl)" stroke="#0a3a5a" stroke-width=".5"/><path d="M17,3.600 q2.600,-3 5.600,-0.600 q-1,3 -4,3z" fill="#2cb468" opacity=".9"/>
<path d="M21.500,8.600 q3.600,2 0.600,4.600 q-3,2.600 0.400,3.400 q2,0.200 3.400,-1" fill="none" stroke="#151515" stroke-width="1.500"/>
<circle cx="18.600" cy="17.300" r="3.100" fill="url(#gg)" stroke="#0a5a14" stroke-width=".6"/>
<path d="M25.400,11.400 l6.400,-3.200 l3,1.600 v8 l-6.400,3.200 l-3,-1.800z" fill="#dedede" stroke="#6c6c6c" stroke-width=".7"/><path d="M28.400,13 l6.400,-3.200 v8 l-6.400,3.200z" fill="#b4b4b4"/><path d="M25.400,11.400 l3,1.600 l6.400,-3.200 l-3,-1.600z" fill="#f6f6f6"/>
<ellipse cx="49" cy="19" rx="8" ry="2.200" fill="#000" opacity=".2"/>
<path d="M39,4 l7,-3 l10,2.600 v12 l-6.600,4.600 l-10.400,-3.800z" fill="#e8e8e8" stroke="#6a6a6a" stroke-width=".7"/>
<path d="M49.400,8 l6.600,-4.400 v12 l-6.600,4.600z" fill="#bdbdbd"/><path d="M39,4 l7,-3 l10,2.600 l-6.600,4.400z" fill="#fafafa"/>
<ellipse cx="44.400" cy="12.200" rx="3.900" ry="4.700" fill="#4a4a4a"/><ellipse cx="44.800" cy="12.600" rx="2" ry="2.600" fill="#9c9c9c"/>
</svg>
<svg style="left:8px;top:48px" width="88" height="15" viewBox="0 0 88 15">
<rect x="0" y="5" width="8" height="5" fill="#8c8c8c"/>
<rect x="8.5" y="2.5" width="76" height="10" fill="#d4d4d4" stroke="#8c8c8c" stroke-width="2"/>
<path d="M16,13.8 L47,3.4 L44,8 L84.5,0 L53,11.2 L56,7 Z" fill="#e8e436"/>
</svg>
<svg style="left:37px;top:65px" width="46" height="26" viewBox="0 0 46 26">
<path d="M3,14 l6,-9 q6,-4 12,-1 v11 l-8,6 z" fill="#b8c4cc" stroke="#4a5860" stroke-width=".8"/>
<path d="M3,14 l8,-5 l3,9 l-5,3z" fill="#5c6a74"/>
<path d="M1,17 l10,4 l4,-3 l-9,-4z" fill="#d0d8dc" stroke="#4a5860" stroke-width=".6"/>
<rect x="16" y="8" width="5" height="6" fill="#d02020"/>
<circle cx="33" cy="12" r="9.5" fill="#2a6ab0" stroke="#123a70" stroke-width="1"/>
<path d="M26,12 l14,-6 l-3,12 l-4,-3 l-2,3 l-1,-4z" fill="#f4f4f4"/>
<circle cx="38.5" cy="17" r="5.4" fill="#e83030"/>
</svg>
<div class="a dbi" style="left:0;top:91px;width:123px;height:33px"></div>
<svg style="left:5.5px;top:92px" width="30" height="30" viewBox="0 0 30 30"><ellipse cx="21" cy="24.5" rx="8" ry="3" fill="#000" opacity=".2"/>
<path d="M25.5,6 q2,-1 2.8,-4.6 q1.4,0.4 0.8,2.6 q-0.6,2.6 -2.4,4.2z" fill="#b8834a" stroke="#4a2c10" stroke-width=".7"/>
<path d="M10,4.5 q7,-2.4 14,-0.6 q3.4,1.6 3.6,6 q0.6,4.8 -0.4,9.6 l-3,0.4 l-0.8,-6 l-2.6,1.2 l0.2,12 q-1.6,1.2 -3.6,0.4 l-0.6,-10.6 q-4.6,-1 -7,-5z" fill="#b8834a" stroke="#4a2c10" stroke-width=".8"/>
<path d="M21.2,14.6 l2.4,3.6 l0.4,1.6" fill="none" stroke="#4a2c10" stroke-width=".6"/>
<path d="M2.6,6.4 q1.6,-3.6 6.4,-3.8 q5.2,0.2 6.4,4.2 q0.8,5.6 -2.6,8 q-4,1.8 -7.6,-0.6 q-2.8,-2.2 -2.6,-7.8z" fill="#c4905a" stroke="#4a2c10" stroke-width=".8"/>
<path d="M2.6,6 q-1.6,3 0.2,6.4 q1.4,-1.6 1,-5.2z M14.8,6 q2.6,2.4 1.6,7 q-2,-1.2 -2.4,-4.6z" fill="#9a6a36" stroke="#4a2c10" stroke-width=".6"/>
<circle cx="6.4" cy="8.6" r=".9" fill="#1a0c00"/><circle cx="10.6" cy="8.8" r=".9" fill="#1a0c00"/><path d="M6.6,12 q1.6,1.4 3.4,0.2" stroke="#3a1c08" stroke-width=".8" fill="none"/>
<path d="M3.4,13.6 l10,3.8 l0.2,9.6 l-10,-4z" fill="#f6f6f6" stroke="#3c3c3c" stroke-width=".8"/></svg>
<svg style="left:115px;top:104px" width="5" height="7" viewBox="0 0 5 7"><path d="M0.5,0.5 L4,3.5 L0.5,6.5 Z" fill="#8c8c8c"/></svg>
<div class="a dbi" style="left:0;top:124px;width:123px;height:33px"></div>
<svg style="left:5.5px;top:125px" width="30" height="30" viewBox="0 0 30 30"><ellipse cx="22.5" cy="20.5" rx="7.5" ry="2.8" fill="#000" opacity=".25" transform="rotate(-22 22.5 20.5)"/>
<path d="M27.6,1.4 q1.6,4.4 -1,8.4 l-12,14.4 l-4.6,-3.6 l10.4,-15 q3.4,-4 7.2,-4.2z" fill="#d41616" stroke="#5a0000" stroke-width=".8"/>
<path d="M19,9 l5,-5.4 q1.6,3 0.4,5.4 l-8.6,10.4z" fill="#f04a3a" opacity=".6"/>
<path d="M27.6,1.4 q1.2,3 0,6.2 q-3,-0.6 -5.4,-3.4 q2.6,-2.6 5.4,-2.8z" fill="#181414"/>
<path d="M12.6,15.4 l-10.4,0.8 l2,3.2 l6.6,0.4z M15.6,21.6 l1,6.6 l-3.6,-1.8 l-1.4,-4z" fill="#b80e0e" stroke="#5a0000" stroke-width=".6"/>
<path d="M10,20.6 l-8.6,7.6 q6.6,0.8 11,-4z" fill="#f6c41c" stroke="#b85a00" stroke-width=".7"/><path d="M9.4,22.4 l-4.6,4.4 q3.6,-0.2 6,-2.6z" fill="#fff2a0"/></svg>
<svg style="left:115px;top:137px" width="5" height="7" viewBox="0 0 5 7"><path d="M0.5,0.5 L4,3.5 L0.5,6.5 Z" fill="#8c8c8c"/></svg>
<div class="a dbi" style="left:0;top:157px;width:123px;height:33px"></div>
<svg style="left:5.5px;top:158px" width="30" height="30" viewBox="0 0 30 30"><path d="M20,22 q5,0.4 6.6,4.4" fill="none" stroke="#222" stroke-width="1.3"/>
<path d="M10.2,1 l6.6,0.6 l1,2.4 l7.7,2.9 v15.7 l-15.3,-6.7z" fill="#d8d8d8" stroke="#1c1c1c" stroke-width=".9"/>
<path d="M10.8,1.6 l5.8,0.6 l1,2.4 l0.2,1.6 l-7,-2.2z" fill="#f2d62c"/>
<path d="M12,5.4 l12.6,4.2 v10.6 l-12.6,-5z" fill="#f8f8f8" stroke="#9a9a9a" stroke-width=".5"/>
<path d="M0.8,20.8 l5.4,-5 l16.2,7.6 l-5.8,5.2z" fill="#d2d2d2" stroke="#222" stroke-width=".9"/>
<path d="M3,20.6 l3.6,-3.2 l13,6 l-3.8,3.4z" fill="#e8e8e8"/></svg>
<svg style="left:115px;top:170px" width="5" height="7" viewBox="0 0 5 7"><path d="M0.5,0.5 L4,3.5 L0.5,6.5 Z" fill="#8c8c8c"/></svg>
<div class="a dbi" style="left:0;top:190px;width:123px;height:33px"></div>
<svg style="left:5.5px;top:191px" width="30" height="30" viewBox="0 0 30 30"><path d="M10,12 q-8,-2 -6,4 q4,2 8,0z M18,10 q3,-7 7,-3 q0,4 -5,6z M13,4 q3,-3 5,3 l-2,8 l-4,-2z" fill="#2a9a40" stroke="#0a5a1a" stroke-width=".6"/>
<circle cx="9.5" cy="5" r="3.6" fill="#e02020" stroke="#700" stroke-width=".6"/><circle cx="23" cy="12" r="3.6" fill="#e02020" stroke="#700" stroke-width=".6"/>
<path d="M9,16 h13 q0,6 -3,8 h-7 q-3,-2 -3,-8z" fill="#d8b848" stroke="#6a4a10" stroke-width=".7"/>
<path d="M11,24 h9 l-1,5 h-7z" fill="#e878c8" stroke="#803068" stroke-width=".7"/></svg>
<svg style="left:115px;top:203px" width="5" height="7" viewBox="0 0 5 7"><path d="M0.5,0.5 L4,3.5 L0.5,6.5 Z" fill="#8c8c8c"/></svg>
<div class="a dbi" style="left:0;top:223px;width:123px;height:33px"></div>
<svg style="left:5.5px;top:224px" width="30" height="30" viewBox="0 0 30 30"><g stroke-width="2.4" fill="none" stroke-linecap="round" stroke-linejoin="round"><path d="M3,12 l3,-9 l5,4" stroke="#e02020"/><path d="M17,3 l9,1 l-5,8" stroke="#2030d8"/><path d="M25,15 v10 l-11,1 " stroke="#18b828"/></g>
<circle cx="14" cy="15" r="8.6" fill="#cfcfcf" stroke="#666" stroke-width=".8"/>
<circle cx="11.5" cy="16" r="4.4" fill="#2a68a8"/><circle cx="11.5" cy="16" r="2" fill="#081828"/>
<circle cx="3" cy="12" r="1.8" fill="#e02020"/><circle cx="6" cy="3" r="1.8" fill="#e02020"/><circle cx="17" cy="3" r="1.8" fill="#2030d8"/><circle cx="26" cy="4" r="1.8" fill="#2030d8"/><circle cx="25" cy="15" r="1.8" fill="#18b828"/><circle cx="25" cy="25" r="1.8" fill="#18b828"/><circle cx="14" cy="26" r="1.8" fill="#18b828"/></svg>
<svg style="left:115px;top:236px" width="5" height="7" viewBox="0 0 5 7"><path d="M0.5,0.5 L4,3.5 L0.5,6.5 Z" fill="#8c8c8c"/></svg>
<div class="a dbi" style="left:0;top:256px;width:123px;height:33px"></div>
<svg style="left:5.5px;top:257px" width="30" height="30" viewBox="0 0 30 30"><circle cx="15" cy="15" r="13" fill="#2f6cb0" stroke="#123a70" stroke-width="1.2"/>
<path d="M8,7 q8,-5 16,1 q-9,-3 -16,-1z" fill="#7ab0e8" opacity=".7"/>
<path d="M2,19 l26,-11 l-6,16 l-7,-4 l-3,4 l-1,-6z" fill="#f2f2f2" stroke="#9aa" stroke-width=".5"/>
<path d="M11,18 l17,-10 l-13,12z" fill="#c4ccd4"/></svg>
<svg style="left:115px;top:269px" width="5" height="7" viewBox="0 0 5 7"><path d="M0.5,0.5 L4,3.5 L0.5,6.5 Z" fill="#8c8c8c"/></svg>
<div class="a dbi" style="left:0;top:289px;width:123px;height:33px"></div>
<svg style="left:5.5px;top:290px" width="30" height="30" viewBox="0 0 30 30"><path d="M2,18 l7,-3 l7,3 v8 l-7,3 l-7,-3z" fill="#4a80d8" stroke="#1a3a80" stroke-width=".7"/><path d="M2,18 l7,3 l7,-3 l-7,-3z" fill="#a8c8f8"/>
<path d="M15,18 l7,-3 l7,3 v8 l-7,3 l-7,-3z" fill="#e04858" stroke="#801828" stroke-width=".7"/><path d="M15,18 l7,3 l7,-3 l-7,-3z" fill="#f8a8b0"/>
<path d="M8,7 l7,-3 l7,3 v8 l-7,3 l-7,-3z" fill="#f0c828" stroke="#806000" stroke-width=".7"/><path d="M8,7 l7,3 l7,-3 l-7,-3z" fill="#fcec90"/></svg>
<svg style="left:115px;top:302px" width="5" height="7" viewBox="0 0 5 7"><path d="M0.5,0.5 L4,3.5 L0.5,6.5 Z" fill="#8c8c8c"/></svg>
</div>
<span class="t" style="left:1199.30px;top:102.05px;font-size:11px;line-height:12.64px;color:#1a1a1a;transform:scaleX(0.9032);-webkit-text-stroke:0.2px #1a1a1a;">Tracker</span>
<span class="t" style="left:1199.30px;top:135.04px;font-size:11px;line-height:12.64px;color:#1a1a1a;transform:scaleX(0.9550);-webkit-text-stroke:0.2px #1a1a1a;">Launchbox</span>
<span class="t" style="left:1199.30px;top:168.04px;font-size:11px;line-height:12.64px;color:#1a1a1a;transform:scaleX(0.9773);-webkit-text-stroke:0.2px #1a1a1a;">Terminale</span>
<span class="t" style="left:1199.30px;top:201.04px;font-size:11px;line-height:12.64px;color:#1a1a1a;transform:scaleX(0.8830);-webkit-text-stroke:0.2px #1a1a1a;">BeShare</span>
<span class="t" style="left:1199.30px;top:234.04px;font-size:11px;line-height:12.64px;color:#1a1a1a;transform:scaleX(0.9476);-webkit-text-stroke:0.2px #1a1a1a;">Vision</span>
<span class="t" style="left:1199.30px;top:267.05px;font-size:11px;line-height:12.64px;color:#1a1a1a;transform:scaleX(1.0611);-webkit-text-stroke:0.2px #1a1a1a;">Telegram</span>
<span class="t" style="left:1199.30px;top:300.05px;font-size:11px;line-height:12.64px;color:#1a1a1a;transform:scaleX(1.1037);-webkit-text-stroke:0.2px #1a1a1a;">demo...iewer</span>
<span class="t" style="left:1248.60px;top:27.05px;font-size:11px;line-height:12.64px;color:#222;transform:scaleX(0.8429);">23:26</span>
<span class="t" style="left:1254.50px;top:50.55px;font-size:11px;line-height:12.64px;color:#222;transform:scaleX(0.9597);">100%</span>
<span class="t" style="left:1166.60px;top:68.45px;font-size:11px;line-height:12.64px;color:#222;transform:scaleX(0.8300);">@976</span>
<span class="t" style="left:1233.20px;top:78.16px;font-size:9px;line-height:10.34px;font-weight:bold;color:#fff;transform:scaleX(0.9500);">5</span>
</body></html>
